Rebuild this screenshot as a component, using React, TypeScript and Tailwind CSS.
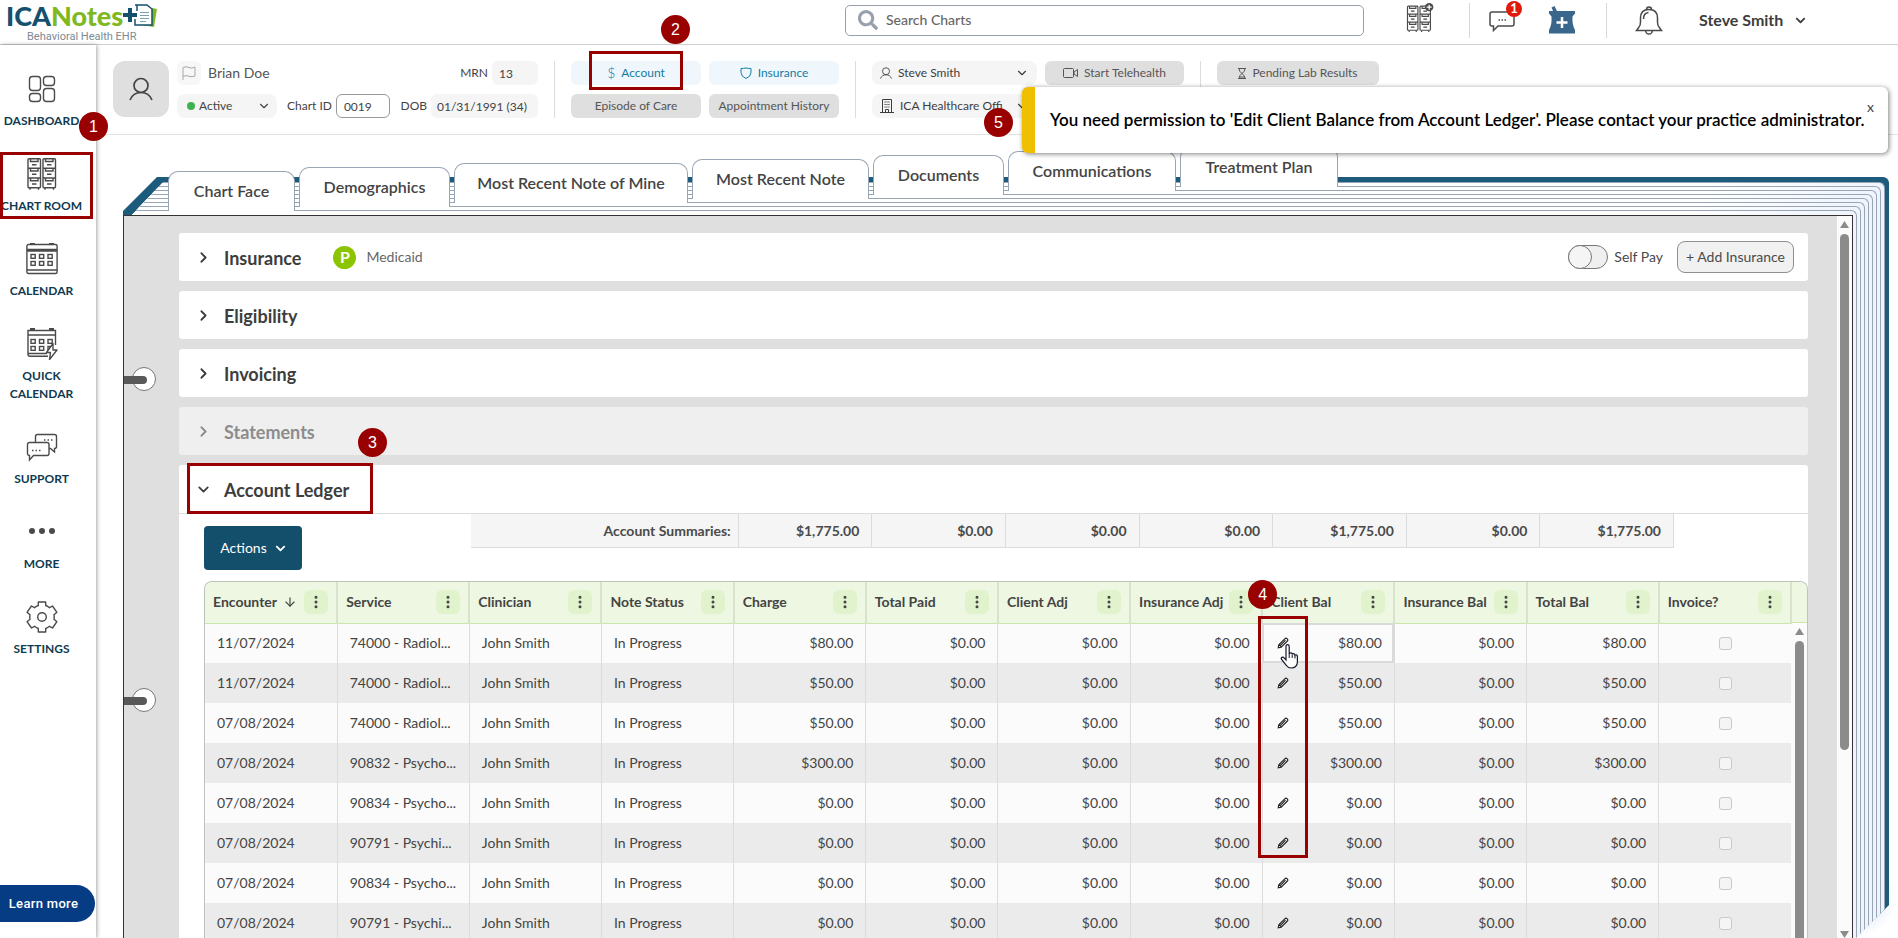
import type { ReactNode } from "react";
import { clsx } from "clsx";
import { ArrowDown, ChevronDown, ChevronRight, EllipsisVertical } from "lucide-react";
import { FaChevronDown, FaSearch } from "react-icons/fa";

interface LedgerRow {
  date: string;
  service: string;
  amount: string;
}

const ledgerRows: LedgerRow[] = [
  { date: "11/07/2024", service: "74000 - Radiol...", amount: "$80.00" },
  { date: "11/07/2024", service: "74000 - Radiol...", amount: "$50.00" },
  { date: "07/08/2024", service: "74000 - Radiol...", amount: "$50.00" },
  { date: "07/08/2024", service: "90832 - Psycho...", amount: "$300.00" },
  { date: "07/08/2024", service: "90834 - Psycho...", amount: "$0.00" },
  { date: "07/08/2024", service: "90791 - Psychi...", amount: "$0.00" },
  { date: "07/08/2024", service: "90834 - Psycho...", amount: "$0.00" },
  { date: "07/08/2024", service: "90791 - Psychi...", amount: "$0.00" },
];

const columns = [
  "Encounter",
  "Service",
  "Clinician",
  "Note Status",
  "Charge",
  "Total Paid",
  "Client Adj",
  "Insurance Adj",
  "Client Bal",
  "Insurance Bal",
  "Total Bal",
  "Invoice?",
];

const summaries = ["$1,775.00", "$0.00", "$0.00", "$0.00", "$1,775.00", "$0.00", "$1,775.00"];

const tabs = [
  { label: "Chart Face", className: "mt-6 w-[127px]" },
  { label: "Demographics", className: "mt-5 w-[151px]" },
  { label: "Most Recent Note of Mine", className: "mt-4 w-[234px]" },
  { label: "Most Recent Note", className: "mt-3 w-[177px]" },
  { label: "Documents", className: "mt-2 w-[131px]" },
  { label: "Communications", className: "mt-1 w-[168px]" },
  { label: "Treatment Plan", className: "w-[158px]" },
];

/* ---------- callouts ---------- */

const Step = ({ n, className }: { n: number; className: string }) => (
  <span
    className={clsx(
      "absolute z-30 flex size-[29px] items-center justify-center rounded-full bg-[#990000] font-['Liberation_Sans',sans-serif] text-base font-normal text-white",
      className,
    )}
  >
    {n}
  </span>
);

const Frame = ({ className }: { className: string }) => (
  <span className={clsx("pointer-events-none absolute z-20 border-3 border-[#990000]", className)} />
);

/* ---------- icons ---------- */

const DashboardIcon = () => (
  <svg className="size-8" viewBox="0 0 32 32" fill="none" stroke="#4a4a4a" strokeWidth="1.4">
    <rect x="3.5" y="3.5" width="11" height="14" rx="3" />
    <rect x="17.5" y="3.5" width="11" height="9" rx="3" />
    <rect x="3.5" y="20.5" width="11" height="8" rx="3" />
    <rect x="17.5" y="15.5" width="11" height="13" rx="3" />
  </svg>
);

const CabinetShape = () => (
  <g fill="none" stroke="#4a4a4a" strokeWidth="1.4">
    {[2, 17].map((x) => (
      <g key={x}>
        <rect x={x} y="0.7" width="12.5" height="29" rx="1" />
        <path d={`M${x + 2} 30v1.8M${x + 10.5} 30v1.8M${x} 10.3h12.5M${x} 20h12.5`} />
        {[1, 10.5, 20.2].map((y) => (
          <path key={y} d={`M${x + 2.5} ${y}v2.5h7.5v-2.5M${x + 4} ${y + 5.8}h4.5`} />
        ))}
      </g>
    ))}
  </g>
);

const CabinetIcon = () => (
  <svg className="size-8" viewBox="0 0 32 32">
    <CabinetShape />
  </svg>
);

const CalendarShape = ({ quick }: { quick?: boolean }) => (
  <svg className="size-8" viewBox="0 0 32 32" fill="none" stroke="#4a4a4a" strokeWidth="1.4">
    {quick ? (
      <path d="M22 28.3H4a2 2 0 0 1-2-2V2.500h27.500V17M2 7h27.500M2 25.500h19" />
    ) : (
      <>
        <rect x="0.9" y="1.5" width="30.2" height="29" rx="1.5" />
        <path d="M1 6.500h30M1 8h30M1 27h30" />
      </>
    )}
    <path d="M4 1h5M23 1h5" strokeWidth="1.8" />
    {[11.5, 18.5].map((y) =>
      [5, 13.5, 22].map((x) => <rect key={`${x}-${y}`} x={x} y={y} width="4.2" height="3.8" />),
    )}
    {quick && <path d="M27 15.500l-6.500 9h4l-1 7 7.500-9.500h-4z" fill="#fff" strokeLinejoin="round" />}
  </svg>
);

const SupportIcon = () => (
  <svg className="size-8" viewBox="0 0 32 32" fill="none" stroke="#4a4a4a" strokeWidth="1.4">
    <path d="M9.500 12V5.500a2 2 0 0 1 2-2h17a2 2 0 0 1 2 2v10a2 2 0 0 1-2 2V21l-4-3.500h-1.500" />
    <path d="M3 11.500h18a2 2 0 0 1 2 2v9a2 2 0 0 1-2 2H7.500L3.500 29v-4.500a2 2 0 0 1-2-2v-9a2 2 0 0 1 2-2z" />
    <path d="M18 9h9M6 19.500h9" strokeDasharray="1.5 2" />
  </svg>
);

const MoreIcon = () => (
  <svg className="size-8" viewBox="0 0 32 32" fill="#4a4a4a">
    <circle cx="6" cy="15" r="3" />
    <circle cx="16" cy="15" r="3" />
    <circle cx="26" cy="15" r="3" />
  </svg>
);

const GearIcon = () => (
  <svg className="size-8" viewBox="0 0 32 32" fill="none" stroke="#4a4a4a" strokeWidth="1.4" strokeLinejoin="round">
    <path d="M12.300 1h7.400v3.500a11.800 11.800 0 0 1 3.800 2.200l3-1.700 4.400 6.300-2.900 2.400a11.800 11.800 0 0 1 0 4.600l2.900 2.400-4.400 6.300-3-1.700a11.800 11.800 0 0 1-3.800 2.200V31h-7.400v-3.500a11.800 11.800 0 0 1-3.800-2.200l-3 1.700L1 20.700l3-2.400a11.800 11.800 0 0 1 0-4.600l-3-2.400L5.500 5l3 1.700a11.800 11.800 0 0 1 3.800-2.200z" />
    <circle cx="16" cy="16" r="4.3" />
  </svg>
);

const PersonIcon = ({ className }: { className: string }) => (
  <svg className={className} viewBox="0 0 24 24" fill="none" stroke="currentColor" strokeWidth="1.7">
    <circle cx="12" cy="8.5" r="7" />
    <path d="M1 23c2-5 6-7.500 11-7.500S21 18 23 23" />
  </svg>
);

const FolderLogo = () => (
  <svg className="h-[24px] w-[34px]" viewBox="0 0 34 24">
    <path d="M29 4l5 1-3 18-13-2z" fill="#7fb81f" />
    <path d="M12 1h12l5 4v16H12v-6M14 1v6" fill="#fff" stroke="#15506f" strokeWidth="1.5" />
    <path d="M0 9h5V4h4v5h5v4H9v5H5v-5H0z" fill="#15506f" />
    <path d="M17 8.500h9M17 11.500h9M17 14.500h9M17 17.500h6" stroke="#7d9db0" strokeWidth="1.2" />
  </svg>
);

const PencilIcon = () => (
  <svg className="size-3" viewBox="0 0 12 12" fill="none" stroke="#222" strokeWidth="1.1">
    <path d="M1.200 10.800l.6-3L8 1.600q1-1 2.200.2t.2 2.200L4.200 10.200zM3 8.800l5.500-5.600M2 7.500l2.500 2.500" />
  </svg>
);

const HandCursor = () => (
  <svg className="pointer-events-none absolute top-[20px] left-[17px] z-30 h-[26px] w-[20px]" viewBox="0 0 20 26">
    <path
      d="M6 2.500q0-1.800 1.600-1.800T9.200 2.500V10q.4-1.300 1.700-1.200t1.300 1.500q.4-.8 1.500-.6t1.200 1.500q.5-.6 1.500-.3t1 1.600v5.500q0 3-1.800 4.500-1.500 1.500-4.500 1.500t-4.600-2.500L1.600 15.500q-.8-1.500.3-2.100t2.200.5L6 16z"
      fill="#fff"
      stroke="#111827"
      strokeWidth="1.2"
    />
    <path d="M9.200 10v4M12.200 10.500v3.500M15 11.500v3" stroke="#111827" />
  </svg>
);

/* ---------- header ---------- */

const Header = () => (
  <header className="flex h-[45px] shrink-0 items-center border-b border-[#cfcfcf] bg-white">
    <a href="#home" className="flex w-[845px] flex-col pl-[6px]">
      <span className="flex h-[28px] items-center text-[27px] leading-7 font-black text-[#15506f]">
        <span>
          ICA<span className="text-[#7fb81f]">Notes</span>
        </span>
        <FolderLogo />
      </span>
      <span className="pt-px pl-[21px] font-['Roboto',sans-serif] text-[11px] leading-3 text-[#7b8a94]">
        Behavioral Health EHR
      </span>
    </a>
    <div className="-mt-1 flex h-[31px] max-w-[519px] flex-1 items-center gap-2 rounded-[5px] border border-[#98a0ab] px-3">
      <FaSearch className="size-5 text-[#98a0ab]" />
      <input
        aria-label="Search Charts"
        placeholder="Search Charts"
        className="min-w-0 flex-1 text-sm font-medium outline-none placeholder:text-[#666]"
      />
    </div>
    <button aria-label="Open chart room" className="-mt-2 ml-[41px]">
      <svg className="size-[30px]" viewBox="0 -3 34 36">
        <CabinetShape />
        <circle cx="28" cy="2" r="5" fill="#4a4a4a" />
        <path d="M25 2h6M28 -1v6" stroke="#fff" strokeWidth="1.5" />
      </svg>
    </button>
    <span className="-mt-1 ml-[34px] h-[35px] w-px bg-[#d8d8d8]" />
    <button aria-label="Messages" className="relative ml-[19px] flex h-[35px] items-center">
      <svg className="h-[22px] w-[26px]" viewBox="0 0 26 22" fill="none" stroke="#4a4a4a" strokeWidth="1.5">
        <path d="M3 1h20a2 2 0 0 1 2 2v10a2 2 0 0 1-2 2H9l-4.500 4.500V15H3a2 2 0 0 1-2-2V3a2 2 0 0 1 2-2z" />
        <path d="M9.500 9h8" strokeDasharray="1.5 1.5" />
      </svg>
      <span className="absolute -top-1 left-[17px] flex size-4 items-center justify-center rounded-full bg-[#e01a0a] text-[13px] font-bold text-white">
        1
      </span>
    </button>
    <button aria-label="Prescriptions" className="-mt-1 ml-[34px]">
      <svg className="h-[28px] w-[26px]" viewBox="0 0 26 28">
        <path d="M2.500 1.500l3-1.500 2.500 5h18v2.500l-2.500 3Q23 19 26 24v3.500H0V24q3-5 2.500-13.500L0 7.500V5h4z" fill="#3b668b" />
        <path d="M13 11v11M7.500 16.500h11" stroke="#fff" strokeWidth="2.5" />
      </svg>
    </button>
    <span className="-mt-1 ml-[31px] h-[35px] w-px bg-[#d8d8d8]" />
    <button aria-label="Notifications" className="-mt-1 ml-7">
      <svg className="h-[29px] w-[28px]" viewBox="0 0 28 29" fill="none" stroke="#4a4a4a" strokeWidth="1.5">
        <path d="M1 24.500h26M4 21q1.500-1.500 1.500-5v-4q0-8.500 8.500-8.500t8.500 8.500v4q0 3.500 1.500 5l2.500 3.500H1.500zM11.500 3.500q0-2.500 2.500-2.500t2.500 2.500M10.500 24.500q.5 3.500 3.500 3.500t3.500-3.500M8.500 13q0-6 5-6.500" />
      </svg>
    </button>
    <button className="-mt-1 ml-9 flex items-center gap-3 text-base font-bold text-[#3d3d3d]">
      Steve Smith
      <FaChevronDown className="size-[11px]" />
    </button>
  </header>
);

/* ---------- sidebar ---------- */

const NavItem = ({ icon, label, children }: { icon: ReactNode; label: string; children?: ReactNode }) => (
  <a
    href={`#${label.toLowerCase().replace(" ", "-")}`}
    className="relative mb-7 flex flex-col items-center gap-[7px] text-center text-xs leading-[18px] font-bold text-[#0f3a50]"
  >
    {icon}
    <span className="whitespace-nowrap">{label}</span>
    {children}
  </a>
);

const Sidebar = () => (
  <aside className="relative z-10 flex w-24 shrink-0 flex-col bg-white shadow-[1px_0_4px_rgba(0,0,0,0.35)]">
    <nav className="flex w-[83px] flex-col pt-7">
      <NavItem icon={<DashboardIcon />} label="DASHBOARD" />
      <NavItem icon={<CabinetIcon />} label="CHART ROOM">
        <Frame className="-top-[6px] left-0 h-[67px] w-[93px]" />
        <Step n={1} className="-top-[46px] left-[79px]" />
      </NavItem>
      <NavItem icon={<CalendarShape />} label="CALENDAR" />
      <a
        href="#quick-calendar"
        className="mb-7 flex flex-col items-center gap-[7px] px-2 text-center text-xs leading-[18px] font-bold text-[#0f3a50]"
      >
        <CalendarShape quick />
        QUICK CALENDAR
      </a>
      <NavItem icon={<SupportIcon />} label="SUPPORT" />
      <NavItem icon={<MoreIcon />} label="MORE" />
      <NavItem icon={<GearIcon />} label="SETTINGS" />
    </nav>
    <button className="mt-auto mb-4 h-[37px] w-[95px] rounded-r-full rounded-l-xl bg-[#053c84] pr-2 font-['Roboto',sans-serif] text-[13px] font-medium tracking-wide text-white">
      Learn more
    </button>
  </aside>
);

/* ---------- patient bar ---------- */

const Divider = () => <span className="mx-4 w-px self-stretch bg-[#dcdcdc]" />;

const PillButton = ({ children, tone = "gray" }: { children: ReactNode; tone?: "gray" | "blue" }) => (
  <button
    className={clsx(
      "flex h-6 w-full items-center justify-center gap-[6px] rounded-md text-xs whitespace-nowrap",
      tone === "blue" ? "bg-[#f0f7fc] text-[#127ba3]" : "bg-[#dfdfdf] text-[#555]",
    )}
  >
    {children}
  </button>
);

const PillSelect = ({ label, value, icon }: { label: string; value: string; icon: ReactNode }) => (
  <div className="flex h-6 items-center gap-[6px] rounded-lg bg-[#f5f5f5] px-2 text-xs text-[#3d3d3d]">
    {icon}
    <select aria-label={label} className="min-w-0 flex-1 appearance-none outline-none">
      <option>{value}</option>
    </select>
    <ChevronDown className="size-[14px] text-[#3d3d3d]" />
  </div>
);

const PatientBar = () => (
  <section className="flex h-[90px] shrink-0 items-start border-b border-[#e2e2e2] py-4 pl-[17px]">
    <div className="mr-2 flex size-14 shrink-0 items-center justify-center rounded-xl bg-[#dfdfdf]">
      <PersonIcon className="size-6 text-[#444]" />
    </div>
    <div className="flex w-[361px] shrink-0 flex-col gap-[9px] text-xs text-[#444]">
      <div className="flex h-6 items-center">
        <button aria-label="Flag chart" className="mr-[7px] flex size-6 items-center justify-center rounded-md bg-[#f7f7f7]">
          <svg className="size-[14px]" viewBox="0 0 14 14" fill="none" stroke="#a8a8a8">
            <path d="M1 14V1.500q3-1.500 6 0t6-.5v9q-3 1.500-6 .2t-6 .3" />
          </svg>
        </button>
        <span className="text-sm text-[#555]">Brian Doe</span>
        <label htmlFor="mrn" className="mr-1 ml-auto">
          MRN
        </label>
        <input id="mrn" readOnly value="13" className="h-6 w-[46px] rounded-md bg-[#f5f5f5] px-[7px]" />
      </div>
      <div className="flex h-6 items-center">
        <div className="flex h-6 w-[100px] items-center gap-1 rounded-lg bg-[#f5f5f5] px-[10px]">
          <span className="size-2 rounded-full bg-[#3fb34f]" />
          <select aria-label="Status" className="min-w-0 flex-1 appearance-none outline-none">
            <option>Active</option>
          </select>
          <ChevronDown className="-mr-1 size-[14px]" />
        </div>
        <label htmlFor="chart-id" className="mr-1 ml-[10px]">
          Chart ID
        </label>
        <input
          id="chart-id"
          defaultValue="0019"
          className="h-6 w-[54px] rounded-md border border-[#999] bg-white px-[7px]"
        />
        <label htmlFor="dob" className="mr-1 ml-auto">
          DOB
        </label>
        <input
          id="dob"
          readOnly
          value="01/31/1991 (34)"
          className="h-6 w-[107px] rounded-md bg-[#f5f5f5] px-[6px]"
        />
      </div>
    </div>
    <Divider />
    <div className="grid w-[268px] shrink-0 grid-cols-2 gap-x-2 gap-y-[9px]">
      <div className="relative">
        <PillButton tone="blue">
          <span className="text-sm font-light">$</span>
          Account
        </PillButton>
        <Frame className="-top-[10px] left-[18px] h-[39px] w-[94px]" />
        <Step n={2} className="-top-[46px] left-[90px]" />
      </div>
      <PillButton tone="blue">
        <svg className="size-3" viewBox="0 0 12 12" fill="none" stroke="currentColor">
          <path d="M1 1.500q2.500 0 5-.5 2.500.5 5 .5v4q0 4-5 6-5-2-5-6z" />
        </svg>
        Insurance
      </PillButton>
      <PillButton>Episode of Care</PillButton>
      <PillButton>Appointment History</PillButton>
    </div>
    <Divider />
    <div className="grid w-[312px] shrink-0 grid-cols-[165px_139px] gap-x-2 gap-y-[9px]">
      <PillSelect label="Provider" value="Steve Smith" icon={<PersonIcon className="size-3" />} />
      <PillButton>
        <svg className="h-[10px] w-[15px]" viewBox="0 0 15 10" fill="none" stroke="currentColor">
          <rect x="0.5" y="0.5" width="10" height="9" rx="1" />
          <path d="M11 4l3.500-2.500v7L11 6z" />
        </svg>
        Start Telehealth
      </PillButton>
      <PillSelect
        label="Office"
        value="ICA Healthcare Offi"
        icon={
          <svg className="size-[14px]" viewBox="0 0 14 14" fill="none" stroke="currentColor">
            <path d="M2.500 13V.5h9V13M0 13.500h14M5.500 13v-2.500h3V13" />
            <path d="M4.500 3h5M4.500 5.500h5M4.500 8h5" strokeDasharray="1.2 .7" />
          </svg>
        }
      />
    </div>
    <Divider />
    <div className="w-[162px] shrink-0">
      <PillButton>
        <svg className="h-[11px] w-2" viewBox="0 0 8 11" fill="none" stroke="currentColor">
          <path d="M0 .5h8M0 10.500h8M1 .5q0 3 3 5 3-2 3-5M1 10.500q0-3 3-5 3 2 3 5M2 9h4" />
        </svg>
        Pending Lab Results
      </PillButton>
    </div>
  </section>
);

/* ---------- chart folder ---------- */

// Each sheet peeks out a few pixels behind the one in front of it
const Sheets = ({ count, children }: { count: number; children: ReactNode }) => (
  <div
    className={clsx(
      "h-full rounded-tr-md border-t border-r border-[#98a5b5] bg-linear-to-r from-white from-90% to-[#eff4fc] pr-[3px]",
      count === 1 ? "pt-1" : "pt-[3px]",
    )}
  >
    {count > 1 ? <Sheets count={count - 1}>{children}</Sheets> : children}
  </div>
);

const FolderTabs = () => (
  <nav className="relative z-[5] -mb-[34px] flex items-start gap-1 pt-3 pl-[72px]">
    {tabs.map((tab) => (
      <a
        key={tab.label}
        href="#tab"
        className={clsx(
          "flex h-10 shrink-0 items-center justify-center rounded-t-[10px] border border-b-0 border-[#98a5b5] bg-white pb-px text-base font-semibold whitespace-nowrap text-[#444]",
          tab.className,
        )}
      >
        {tab.label}
      </a>
    ))}
  </nav>
);

const DrawerHandle = ({ className }: { className: string }) => (
  <button aria-label="Open drawer" className={clsx("relative block h-6 w-8", className)}>
    <span className="absolute top-0 left-2 size-6 rounded-full border border-[#777] bg-white" />
    <span className="absolute top-[9px] left-0 h-2 w-[23px] rounded-r bg-[#595959]" />
  </button>
);

const ArrowTip = ({ down }: { down?: boolean }) => (
  <svg className={clsx("h-[7px] w-[9px] shrink-0", down && "rotate-180")} viewBox="0 0 9 7" fill="#8b8b8b">
    <path d="M4.500 0L9 7H0z" />
  </svg>
);

const AccordionTitle = ({ title, open, muted }: { title: string; open?: boolean; muted?: boolean }) => (
  <button
    className={clsx(
      "flex items-center gap-3 pt-px text-lg font-bold",
      muted ? "text-[#8c8c8c]" : "text-[#3d3d3d]",
    )}
  >
    {open ? <ChevronDown className="size-[17px]" strokeWidth={2.5} /> : <ChevronRight className="size-[17px]" strokeWidth={2.5} />}
    {title}
  </button>
);

const InsuranceCard = () => (
  <section className="flex h-12 shrink-0 items-center rounded-[3px] bg-white pr-[14px] pl-4">
    <AccordionTitle title="Insurance" />
    <span className="ml-8 flex size-[23px] items-center justify-center rounded-full bg-[#8bc400] font-bold text-white">
      P
    </span>
    <span className="ml-[10px] text-sm text-[#666]">Medicaid</span>
    <label className="ml-auto flex items-center gap-[6px] text-sm text-[#4a4a4a]">
      <input type="checkbox" role="switch" className="peer sr-only" />
      <span className="flex h-6 w-10 rounded-full border border-[#777] bg-[#efefef]">
        <span className="-my-px -ml-px size-6 rounded-full border border-[#777] bg-[#f5f5f5]" />
      </span>
      Self Pay
    </label>
    <button className="ml-[14px] h-8 w-[117px] rounded-lg border border-[#8f8f8f] bg-[#f1f1f1] text-sm text-[#4a4a4a]">
      + Add Insurance
    </button>
  </section>
);

const SummaryTable = () => (
  <div className="mr-[134px] ml-[169px] min-w-0 flex-1">
    <table className="h-[34px] w-full table-fixed border-b border-[#dcdcdc] bg-[#f5f5f5] text-right text-sm font-bold text-[#4a4a4a]">
      <tbody>
        <tr>
          <th scope="row" colSpan={2} className="pr-[7px] text-right">
            Account Summaries:
          </th>
          {summaries.map((value, i) => (
            <td key={i} className="border-l border-[#dcdcdc] pr-3 last:border-r">
              {value}
            </td>
          ))}
        </tr>
      </tbody>
    </table>
  </div>
);

const money = "border-r border-[#dcdcdc] pr-3 text-right";
const text = "border-r border-[#dcdcdc] pl-3 whitespace-nowrap";

const LedgerTable = () => (
  <div className="flex rounded-t-lg border border-b-0 border-[#bfc3bb] bg-[#fbfbfb]">
    <div className="min-w-0 flex-1">
      <table className="w-full table-fixed text-sm text-[#444]">
        <thead>
          <tr className="h-[41px] border-b border-[#cbe5ac] bg-[#eef7e2]">
            {columns.map((name) => (
              <th
                key={name}
                className="relative border-r-2 border-[#d9e2cd] px-2 text-left font-bold first:rounded-tl-lg"
              >
                <div className="flex items-center whitespace-nowrap">
                  {name}
                  {name === "Encounter" && <ArrowDown className="ml-[6px] size-[14px]" />}
                  <button
                    aria-label={`${name} menu`}
                    className="ml-auto flex size-6 shrink-0 items-center justify-center rounded-md bg-[#e0f3cc]"
                  >
                    <EllipsisVertical className="size-4" strokeWidth={2.5} />
                  </button>
                </div>
                {name === "Client Bal" && (
                  <>
                    <Step n={4} className="-top-[2px] -left-[15px]" />
                    <Frame className="top-[34px] -left-[5px] h-[242px] w-[50px]" />
                  </>
                )}
              </th>
            ))}
          </tr>
        </thead>
        <tbody>
          {ledgerRows.map((row, i) => (
            <tr key={i} className="h-10 odd:bg-[#fbfbfb] even:bg-[#ebebeb] first:bg-[#f5f5f5]">
              <td className={text}>{row.date}</td>
              <td className={text}>{row.service}</td>
              <td className={text}>John Smith</td>
              <td className={text}>In Progress</td>
              <td className={money}>{row.amount}</td>
              <td className={money}>$0.00</td>
              <td className={money}>$0.00</td>
              <td className={money}>$0.00</td>
              <td
                className={clsx(
                  "relative border-r border-[#dcdcdc]",
                  i === 0 && "outline-2 -outline-offset-2 outline-[#dadada]",
                )}
              >
                <div className="flex items-center justify-between pr-3 pl-[14px]">
                  <button aria-label="Edit client balance">
                    <PencilIcon />
                  </button>
                  {row.amount}
                </div>
                {i === 0 && <HandCursor />}
              </td>
              <td className={money}>$0.00</td>
              <td className={money}>{row.amount}</td>
              <td>
                <input
                  type="checkbox"
                  aria-label="Invoice"
                  className="mx-auto block size-[13px] appearance-none rounded-[3px] border border-[#c9c9c9] bg-[#f5f5f5]"
                />
              </td>
            </tr>
          ))}
        </tbody>
      </table>
    </div>
    <div className="flex w-[15px] shrink-0 flex-col items-center">
      <div className="h-[41px] w-full shrink-0 rounded-tr-lg border-b border-[#cbe5ac] bg-[#eef7e2]" />
      <div className="flex w-full flex-1 flex-col items-center gap-[6px] pt-[5px]">
        <ArrowTip />
        <span className="w-[9px] flex-1 rounded-t-full bg-[#8b8b8b]" />
      </div>
    </div>
  </div>
);

const LedgerCard = () => (
  <section className="rounded-[3px] bg-white">
    <div className="relative flex h-[49px] items-center border-b border-[#dcdcdc] pl-4">
      <AccordionTitle title="Account Ledger" open />
      <Frame className="-top-[2px] left-2 h-[51px] w-[186px]" />
      <Step n={3} className="-top-[37px] left-[179px]" />
    </div>
    <div className="flex items-start pl-[25px]">
      <button className="mt-3 mb-[11px] flex h-11 w-[98px] shrink-0 items-center justify-center gap-2 rounded-[4px] bg-[#134e6b] text-sm text-white">
        Actions
        <FaChevronDown className="size-[11px]" />
      </button>
      <SummaryTable />
    </div>
    <div className="pl-[25px]">
      <LedgerTable />
    </div>
  </section>
);

const ChartPanel = () => (
  <main className="flex h-full border border-b-0 border-[#333] bg-[#dfdfdf]">
    <div className="w-[55px] shrink-0">
      <DrawerHandle className="mt-[151px]" />
      <DrawerHandle className="mt-[297px]" />
    </div>
    <div className="mr-[29px] flex min-w-0 flex-1 flex-col gap-[10px] overflow-hidden pt-[17px]">
      <InsuranceCard />
      <section className="flex h-12 shrink-0 items-center rounded-[3px] bg-white pl-4">
        <AccordionTitle title="Eligibility" />
      </section>
      <section className="flex h-12 shrink-0 items-center rounded-[3px] bg-white pl-4">
        <AccordionTitle title="Invoicing" />
      </section>
      <section className="flex h-12 shrink-0 items-center rounded-[3px] bg-[#efefef] pl-4">
        <AccordionTitle title="Statements" muted />
      </section>
      <LedgerCard />
    </div>
    <div className="flex w-[15px] shrink-0 flex-col items-center bg-[#fbfbfb] pt-[5px]">
      <ArrowTip />
      <span className="mt-[6px] h-[72%] w-[9px] rounded-full bg-[#8b8b8b]" />
      <span className="flex-1" />
      <ArrowTip down />
    </div>
  </main>
);

const Toast = () => (
  <div
    role="alert"
    className="absolute top-[87px] right-[10px] z-20 flex h-[66px] w-[866px] items-center rounded-md border-l-[13px] border-[#f0c000] bg-white text-[17px] font-semibold text-black shadow-[1px_1px_5px_rgba(0,0,0,0.5)]"
  >
    <p className="pl-[15px] whitespace-nowrap">
      You need permission to 'Edit Client Balance from Account Ledger'. Please contact your practice
      administrator.
    </p>
    <button aria-label="Close" className="absolute top-[10px] right-[14px] text-sm font-normal text-[#444]">
      x
    </button>
    <Step n={5} className="top-[21px] -left-[51px]" />
  </div>
);

export default function App() {
  return (
    <div className="relative flex h-screen flex-col overflow-hidden bg-white font-['Lato',sans-serif] text-[#444]">
      <Header />
      <div className="flex min-h-0 flex-1">
        <Sidebar />
        <div className="flex min-w-0 flex-1 flex-col">
          <PatientBar />
          <FolderTabs />
          <div className="relative mr-[9px] ml-[27px] min-h-0 flex-1">
            <div className="absolute -right-2 bottom-0 size-20 bg-radial from-[#cfdcf8] to-transparent to-70%" />
            <div className="relative h-full rounded-tr-md bg-[#1d5b7c] pt-[5px] pr-1 [clip-path:polygon(0_34px,34px_0,100%_0,100%_calc(100%-33px),calc(100%-33px)_100%,0_100%)]">
              <div className="h-full [clip-path:polygon(0_33px,9px_33px,40px_0,100%_0,100%_100%,0_100%)]">
                <Sheets count={8}>
                  <ChartPanel />
                </Sheets>
              </div>
            </div>
          </div>
        </div>
      </div>
      <Toast />
    </div>
  );
}
